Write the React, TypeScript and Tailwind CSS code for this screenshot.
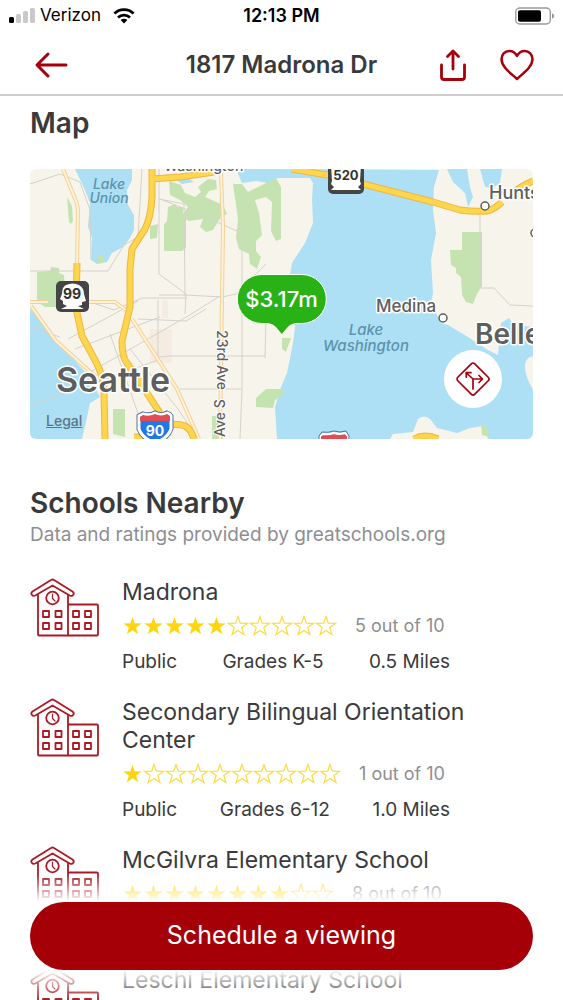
import React from "react";

interface ISchool {
  name: string;
  rating: number;
  kind: string;
  grades: string;
  distance: string;
}

const schools: ISchool[] = [
  {
    name: "Madrona",
    rating: 5,
    kind: "Public",
    grades: "Grades K-5",
    distance: "0.5 Miles",
  },
  {
    name: "Secondary Bilingual Orientation Center",
    rating: 1,
    kind: "Public",
    grades: "Grades 6-12",
    distance: "1.0 Miles",
  },
  {
    name: "McGilvra Elementary School",
    rating: 8,
    kind: "Public",
    grades: "Grades K-5",
    distance: "1.1 Miles",
  },
  {
    name: "Leschi Elementary School",
    rating: 4,
    kind: "Public",
    grades: "Grades K-5",
    distance: "1.2 Miles",
  },
];

const StatusBar: React.FC = () => (
  <div className="grid h-8 grid-cols-3 items-center px-2 text-black">
    <div className="flex items-center gap-1">
      <svg className="h-4 w-7" viewBox="0 0 28 16" aria-hidden="true">
        <rect x="1" y="9" width="5" height="6" rx="1.5" />
        <g fill="#c9c9cb">
          <rect x="8" y="6" width="5" height="9" rx="1.5" />
          <rect x="15" y="3" width="5" height="12" rx="1.5" />
          <rect x="22" y="0" width="5" height="15" rx="1.5" />
        </g>
      </svg>
      <span className="text-[17px]">Verizon</span>
      <svg className="ml-2 h-4 w-[22px]" viewBox="0 0 22 16" aria-hidden="true">
        <g fill="none" stroke="currentColor" strokeWidth="2.8">
          <path d="M1.4 5.6a13.8 13.8 0 0 1 19.2 0" />
          <path d="M5 9.6a8.7 8.7 0 0 1 12 0" />
        </g>
        <path d="M11 15.4 7.6 12a4.9 4.9 0 0 1 6.8 0Z" />
      </svg>
    </div>
    <span className="text-center text-lg font-semibold">12:13 PM</span>
    <svg
      className="h-[18px] w-10 justify-self-end"
      viewBox="0 0 40 18"
      aria-hidden="true"
    >
      <rect
        x="0.8"
        y="1"
        width="34.5"
        height="16"
        rx="4"
        fill="none"
        stroke="#9a9a9a"
        strokeWidth="1.4"
      />
      <rect x="3" y="3.2" width="23" height="11.6" rx="2" />
      <path d="M37 6.2q2.4 1 2.4 2.8T37 11.8Z" fill="#9a9a9a" />
    </svg>
  </div>
);

const NavBar: React.FC = () => (
  <header className="flex h-16 items-center border-b-2 border-[#cfcfcf] px-7 pt-1 text-[#a5000b]">
    <div className="flex flex-1">
      <button type="button" aria-label="Back" className="p-1">
        <svg
          className="h-9 w-9"
          viewBox="0 0 36 36"
          fill="none"
          stroke="currentColor"
          strokeWidth="3"
          strokeLinecap="round"
          strokeLinejoin="round"
        >
          <path d="M34 18H5M16 7 5 18l11 11" />
        </svg>
      </button>
    </div>
    <h1 className="text-2xl font-semibold text-[#3a3a3c]">1817 Madrona Dr</h1>
    <div className="flex flex-1 justify-end gap-7">
      <button type="button" aria-label="Share">
        <svg
          className="h-9 w-9"
          viewBox="0 0 36 36"
          fill="none"
          stroke="currentColor"
          strokeWidth="2.8"
          strokeLinecap="round"
          strokeLinejoin="round"
        >
          <path d="M6.500 18v12q0 2.500 2.500 2.500h18q2.500 0 2.500-2.500V18M18 22V4.500M12.500 9.500 18 4l5.500 5.500" />
        </svg>
      </button>
      <button type="button" aria-label="Save to favourites">
        <svg
          className="h-9 w-9"
          viewBox="0 0 36 36"
          fill="none"
          stroke="currentColor"
          strokeWidth="2.500"
          strokeLinejoin="round"
        >
          <path d="M18 32C13 27 2.500 20.500 2.500 12 2.500 7.500 5.800 4 10.300 4 13.800 4 16.500 6 18 9c1.500-3 4.200-5 7.700-5 4.500 0 7.800 3.500 7.800 8C33.500 20.500 23 27 18 32Z" />
        </svg>
      </button>
    </div>
  </header>
);

const MapDrawing: React.FC = () => (
  <svg
    className="block h-full w-full"
    viewBox="0 0 503 270"
    preserveAspectRatio="xMidYMid slice"
    fontFamily="Inter, sans-serif"
    role="img"
    aria-label="Map of Seattle around Madrona"
  >
    <rect width="503" height="270" fill="#f7f4ec" />

    {/* water */}
    <g fill="#ade0f4">
      <path d="M45 0 55 21l5 13-2 24 4 10-1 23 6 4 10-2 5-9 11-6 7-9 4-8V46l-6-10-1-15 5-10V0Z" />
      <path d="M0 140l10 9 13 19 14 13 10 13 13 14 10 20-10 6-3 14-5 22H0Z" />
      <path d="M142 8l14 0 8 5-12 2ZM206 0l6 14 14-2 12 2 12-6V0Z" />
      <path d="M246 0v9l34 0 3 5-1 17 1 23-8 20-13 20-2 12 5 52-2 16-6 30-6 14-6 20 2 32h113l3-5 20-2 5-13q6-5 12 0l7 9 20 5 13-5 13-2 5 13h45V158l-19-2-5-7-8 5-3 32-10-5-20-13-20-12-7-2-10-20 2-10-2-33 5-27-3-23 1-23 5-17Z" />
      <path d="M417 0h20l3 18 3 10-5 10-3-14-12-11ZM450 0h22l-2 14-7 5-8-1Z" />
    </g>
    <path d="M503 187q-9 2-8 12t8 22Z" fill="#f7f4ec" />

    {/* parks */}
    <g fill="#c5e3b1">
      <path d="M139 12l12 4 4 8 10 4 6-5-3-5 10-8 8 1 1 9-8 2-4 6 18 8 4 9-6 3-8 13-7 2-6-5 3-8-14 2-8-4 7-10-8-7-10-5Z" />
      <path d="M138 38l7-3 2 3 6 0 0 11 3 1v29l-4 3h-18V55l3-3ZM120 57l8-2-1 14-7 1Z" />
      <path d="M203 15h9l6 8 12-6 8-4 8-4 5 9v52l-5 2-5-10 1-29-6-5-11 3 4 13 3 22-6 6 0 10 5 6-4 12-7-5-1-10-10-5-3-11 2-19Z" />
      <path d="M7 103l13-1 1-4 8 1 0 5 5 2 1 20-8 12H15l-8-5Z" />
      <path d="M37 28l5 9 1 15-2 3-2-2ZM67 87l7-1 0 7-7 2Z" />
      <path d="M83 240h12v28l-12-3ZM182 247h11v23h-11Z" />
      <path d="M226 229l10-9h17l0 5-8 6-2 8-17-1ZM252 169h9l-5 14-4-3Z" />
      <path d="M432 63h20v54l-5 8-4 10-7-2-4-7-1-18-5-4V99l-5-3-1-15h12Z" />
      <path d="M451 255l5 1 4 12-8-2Z" />
    </g>
    <path d="M120 160h22v34h-22ZM132 131h6v18h-6Z" fill="#f4e3d5" opacity="0.5" />

    {/* minor streets */}
    <g fill="none" stroke="#d6d1c9" strokeWidth="1">
      <path d="M0 15l30-10 20 8 10 28 1 50M0 102h78l16-26 14-8 4-68M129 0v105l27 20-1 20M129 30l25 5 1 92M130 30l50 20 27 12" />
      <path d="M129 126h27l36 2 14-3 30-30M0 133h60l24 8 28-12h45M38 170l70-38M45 180l85-32M62 202l96-55 32-20M235 189l1-40" />
      <path d="M100 180l48 60 20 30M80 165l30 85M128 131v60l-66 24M150 220h62l-2 50M212 60v160M128 188l12-1h95M108 150l48 2 20-12M0 158l30 10M0 237l58-22M450 42v77h14l16 17 23 1" />
    </g>

    {/* secondary roads */}
    <g fill="none" stroke="#f6cf94" strokeWidth="4">
      <path d="M33 0l13 32 2 8-1 56M191 4l2 54-2 140-1 72M102 150l45 70 22 50M0 133h18M35 133h50l12 9M1 137l25 35 40 36" />
    </g>
    <g fill="none" stroke="#fdf3d8" strokeWidth="2">
      <path d="M33 0l13 32 2 8-1 56M191 4l2 54-2 140-1 72M102 150l45 70 22 50M0 133h18M35 133h50l12 9M1 137l25 35 40 36" />
    </g>

    {/* highways */}
    <g fill="none" stroke="#f0b548" strokeWidth="7" strokeLinejoin="round">
      <path d="M122 0v28q-1 20-7 32l-13 20-2 20v38l-8 34q0 16 5 22l16 24 17 26M122 10l28-2 34-5" />
      <path d="M47 94l-1 45 6 28 13 24q9 16 9 32l1 47M130 256q18-2 25 1 6 3 9 13M104 268h12" />
      <path d="M262 0l35 6 36 9 70 18 27 8q14 2 27 1 8-2 15-9M483 24q8-7 20-12M384 270q11-6 24 0" />
    </g>
    <g fill="none" stroke="#fdd64b" strokeWidth="5" strokeLinejoin="round">
      <path d="M122 0v28q-1 20-7 32l-13 20-2 20v38l-8 34q0 16 5 22l16 24 17 26M122 10l28-2 34-5" />
      <path d="M47 94l-1 45 6 28 13 24q9 16 9 32l1 47M130 256q18-2 25 1 6 3 9 13M104 268h12" />
      <path d="M262 0l35 6 36 9 70 18 27 8q14 2 27 1 8-2 15-9M483 24q8-7 20-12M384 270q11-6 24 0" />
    </g>

    {/* route shields */}
    <g>
      <rect x="26" y="112" width="33" height="31" rx="5" fill="#454545" />
      <path
        d="M36 116q7-3 13 0 5 3 5 9l2 7-4 1v3l-4 1 6 3H31l6-3-4-2v-3l-3-2 2-5q0-7 4-9Z"
        fill="#fff"
      />
      <text x="42" y="130" textAnchor="middle" fontSize="14" fontWeight="700" fill="#333">
        99
      </text>
      <rect x="298" y="-7" width="36" height="32" rx="5" fill="#454545" />
      <path d="M301-4h30l-1 16 1 3-3 3 3 3h-30l3-3-3-3 1-3Z" fill="#fff" />
      <text x="316" y="11" textAnchor="middle" fontSize="13" fontWeight="700" fill="#333">
        520
      </text>
    </g>
    <g>
      <path
        d="M113 245q6 2 12-1 6 3 12 0 3 1 4 3 0 8 0 13-3 9-16 14-13-5-16-14v-13Z"
        fill="#56719c"
        stroke="#56719c"
        strokeWidth="5"
      />
      <path
        d="M113 245q6 2 12-1 6 3 12 0 3 1 4 3 0 8 0 13-3 9-16 14-13-5-16-14v-13Z"
        fill="#1f78e6"
        stroke="#fff"
        strokeWidth="3"
      />
      <path d="M110 252v-4l3-2q6 2 12-1 6 3 12 0l3 2v5Z" fill="#e34b52" />
      <text x="125" y="267" textAnchor="middle" fontSize="14" fontWeight="700" fill="#fff">
        90
      </text>
      <path
        d="M293 265q6 1 11-1 5 2 11 0l3 3v5h-28v-5Z"
        fill="#e34b52"
        stroke="#fff"
        strokeWidth="2"
      />
      <path
        d="M292 263q6 1 12-1 6 2 12 0l3 5v5M289 272v-5l3-4"
        fill="none"
        stroke="#56719c"
        strokeWidth="1"
      />
    </g>

    {/* place names */}
    <g fill="#5c93ad" fontSize="14" fontStyle="italic" fontWeight="500" textAnchor="middle">
      <text x="79" y="20">Lake</text>
      <text x="79" y="34">Union</text>
      <text x="336" y="166" fontSize="15">Lake</text>
      <text x="336" y="182" fontSize="15">Washington</text>
    </g>
    <g
      fill="#5e5e5e"
      stroke="#fff"
      strokeWidth="3"
      strokeLinejoin="round"
      paintOrder="stroke"
      fontWeight="600"
    >
      <text x="134" y="2" fontSize="14" fontWeight="500">Washington</text>
      <text x="26" y="223" fontSize="34">Seattle</text>
      <text x="459" y="30" fontSize="18" fontWeight="500">Huntspoint</text>
      <text x="346" y="143" fontSize="17" fontWeight="500">Medina</text>
      <text x="445" y="175" fontSize="28">Bellevue</text>
      <g fontSize="14" fontWeight="500" strokeWidth="2">
        <text transform="translate(187 161) rotate(90)">23rd Ave</text>
        <text transform="translate(195 268) rotate(-90)">Ave S</text>
      </g>
    </g>
    <g fill="#fff" stroke="#5e5e5e" strokeWidth="1.500">
      <circle cx="455" cy="37" r="4" />
      <circle cx="413" cy="149" r="4" />
      <circle cx="505" cy="64" r="4" />
    </g>
  </svg>
);

const PropertyMap: React.FC = () => (
  <div className="relative mt-7 h-[270px] overflow-hidden rounded-md">
    <MapDrawing />
    <div className="absolute left-1/2 top-[105px] -translate-x-1/2">
      <div className="flex h-[50px] items-center rounded-full border border-white bg-[#29b216] px-2 text-[22px] font-medium text-white">
        $3.17m
      </div>
      <svg className="mx-auto -mt-px block h-3 w-7" viewBox="0 0 28 12" aria-hidden="true">
        <path d="M0 0h28Q22 1 19 5l-5 6-5-6Q6 1 0 0Z" fill="#29b216" />
      </svg>
    </div>
    <a
      href="#legal"
      className="absolute bottom-2 left-4 text-sm font-medium text-[#5a7587] underline"
    >
      Legal
    </a>
    <button
      type="button"
      aria-label="Directions"
      className="absolute bottom-[31px] right-[31px] flex h-[58px] w-[58px] items-center justify-center rounded-full bg-white text-[#a5000b]"
    >
      <svg
        className="h-9 w-9"
        viewBox="0 0 36 36"
        fill="none"
        stroke="currentColor"
        strokeWidth="1.700"
        strokeLinecap="round"
        strokeLinejoin="round"
      >
        <rect x="6" y="6" width="24" height="24" rx="2.500" transform="rotate(45 18 18)" />
        <path d="M18 28V18L11.500 12M11.300 16.200 11.200 11.700 16 11.700M18 18h9M24 14.500 27.500 18 24 21.500" />
      </svg>
    </button>
  </div>
);

const SchoolIcon: React.FC = () => (
  <svg
    className="h-[60px] w-[69px] shrink-0"
    viewBox="0 0 69 60"
    fill="none"
    stroke="#ab1a24"
    strokeWidth="1.800"
    strokeLinecap="round"
    strokeLinejoin="round"
    aria-hidden="true"
  >
    <path d="M21 2q1.500-1 3 0L42.500 13.500q2 1.500.8 3.300t-3.600.7L22.500 7.500 5.300 17.500q-2.300 1-3.500-.8T2.500 13.500Z" />
    <path d="M8 17v39.500q0 1 1 1h29V17M38.500 26.500H67q1 0 1 1v29q0 1-1 1H38.500" />
    <circle cx="22.500" cy="20" r="6.300" />
    <path d="M22.500 16v4.500l2.500 2.500" strokeWidth="1.200" />
    <path d="M13 33h6v6h-6ZM25.500 33h6v6h-6ZM43 33h6v6h-6ZM55 33h6v6h-6ZM13 45h6v6h-6ZM25.500 45h6v6h-6ZM43 45h6v6h-6ZM55 45h6v6h-6Z" />
  </svg>
);

const Star: React.FC<{ filled: boolean }> = ({ filled }) => (
  <svg
    className={filled ? "h-[22px] w-[21px]" : "h-[22px] w-[22px]"}
    viewBox="0 0 22 22"
    fill={filled ? "#fdd60f" : "none"}
    stroke={filled ? "none" : "#fbdc3f"}
    strokeWidth="1.200"
  >
    <path d="M11 1.500 13.300 8.200 20.600 8.300 14.800 12.600 16.900 19.600 11 15.400 5.100 19.600 7.200 12.600 1.400 8.300 8.700 8.200Z" />
  </svg>
);

const SchoolRow: React.FC<{ school: ISchool }> = ({ school }) => (
  <li className="flex gap-[23px]">
    <SchoolIcon />
    <div className="min-w-0 max-w-[360px] flex-1 text-[#3a3a3c]">
      <h3 className="text-[23px] leading-7">{school.name}</h3>
      <div className="mt-[6px] flex h-7 items-center gap-[18px]">
        <div className="flex" role="img" aria-label={`Rated ${school.rating} of 10`}>
          {Array.from({ length: 10 }, (_, i) => (
            <Star key={i} filled={i < school.rating} />
          ))}
        </div>
        <span className="text-lg text-[#8e8e93]">{school.rating} out of 10</span>
      </div>
      <div className="mt-2 flex max-w-[328px] justify-between text-[19px] leading-7">
        <span>{school.kind}</span>
        <span>{school.grades}</span>
        <span>{school.distance}</span>
      </div>
    </div>
  </li>
);

const ScheduleBar: React.FC = () => (
  <div className="absolute inset-x-0 bottom-0">
    <div className="h-7 bg-linear-to-b from-white/0 to-white" />
    <div className="bg-white px-[30px]">
      <button
        type="button"
        className="h-[68px] w-full rounded-full bg-[#a50007] text-[25px] text-white"
      >
        Schedule a viewing
      </button>
    </div>
    <div className="h-[30px] bg-linear-to-b from-white to-white/0" />
  </div>
);

export default function App() {
  return (
    <div className="relative flex h-screen flex-col overflow-hidden bg-white font-['Inter',sans-serif]">
      <StatusBar />
      <NavBar />
      <main className="min-h-0 flex-1 overflow-y-auto px-[30px] pt-[9px] [scrollbar-width:none]">
        <section>
          <h2 className="text-[28px] font-semibold leading-9 text-[#3a3a3c]">Map</h2>
          <PropertyMap />
        </section>
        <section className="mt-11">
          <h2 className="text-[28px] font-semibold leading-10 text-[#3a3a3c]">
            Schools Nearby
          </h2>
          <p className="text-[19px] leading-6 text-[#8e8e93]">
            Data and ratings provided by greatschools.org
          </p>
          <ul className="mt-[31px] flex flex-col gap-[22px]">
            {schools.map((school) => (
              <SchoolRow key={school.name} school={school} />
            ))}
          </ul>
        </section>
      </main>
      <ScheduleBar />
    </div>
  );
}
